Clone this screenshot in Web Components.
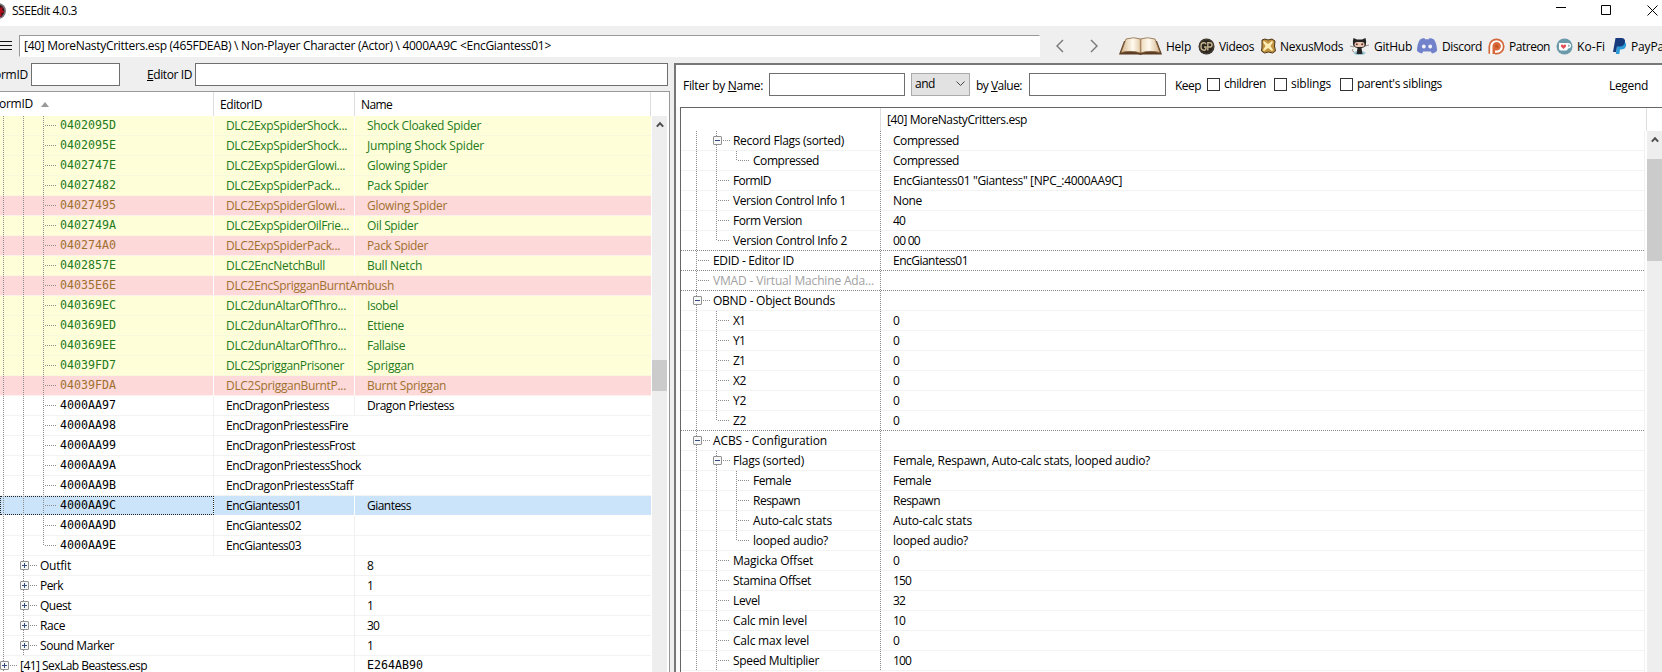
<!DOCTYPE html>
<html lang="en">
<head>
<meta charset="utf-8">
<title>SSEEdit 4.0.3</title>
<style>
    html, body {
        margin: 0;
        height: 100%;
        overflow: hidden;
    }
    body {
        font: 12px/20px "Open Sans", "Noto Sans", sans-serif;
        color: #000;
        background: #efefef;
    }
</style>
</head>
<body>
<edit-app></edit-app>
<script>
const icons = {
    app: `<svg width="16" height="18" viewBox="0 0 16 18"><circle cx="7" cy="9" r="8" fill="#77777d"/><circle cx="7" cy="9" r="6.3" fill="#35191d"/><path d="M7 3l1 3 4-1-1 3 3 2-4 1 1 4-4-2-4 2 1-4-3-2 3-1-1-3 3 1z" fill="#b50d1b"/></svg>`,
    menu: `<svg width="16" height="14" viewBox="0 0 16 14"><path d="M0 2.5h16M0 6.5h16M0 10.5h16" stroke="#111" stroke-width="1"/></svg>`,
    back: `<svg width="8" height="14" viewBox="0 0 8 14"><path d="M7 1L1 7l6 6" fill="none" stroke="#777" stroke-width="1.4"/></svg>`,
    next: `<svg width="8" height="14" viewBox="0 0 8 14"><path d="M1 1l6 6-6 6" fill="none" stroke="#777" stroke-width="1.4"/></svg>`,
    min: `<svg width="11" height="11" viewBox="0 0 11 11"><path d="M0 5.5h10" stroke="#000"/></svg>`,
    max: `<svg width="11" height="11" viewBox="0 0 11 11"><path d="M.5.5h9v9h-9z" fill="none" stroke="#000"/></svg>`,
    close: `<svg width="11" height="11" viewBox="0 0 11 11"><path d="M.5.5l10 10M10.5.5l-10 10" stroke="#000"/></svg>`,
    up: `<svg width="8" height="7" viewBox="0 0 8 7"><path d="M.8 5.6L4 2.2l3.2 3.4" fill="none" stroke="#505050" stroke-width="2"/></svg>`,
    down: `<svg width="9" height="6" viewBox="0 0 9 6"><path d="M.5.5l4 4 4-4" fill="none" stroke="#444"/></svg>`,
    book: `<svg width="43" height="18" viewBox="0 0 43 18"><defs><linearGradient id="p"><stop offset="0" stop-color="#d5b68c"/><stop offset=".3" stop-color="#fffaf0"/><stop offset=".47" stop-color="#e8d3b4"/><stop offset=".5" stop-color="#a98660"/><stop offset=".54" stop-color="#f0dfc5"/><stop offset=".72" stop-color="#fffaf0"/><stop offset="1" stop-color="#d5b68c"/></linearGradient></defs><path d="M5 4L0 17.5h19l2.500.5 2.500-.5h19L38 4z" fill="#5c3c22"/><path d="M7 2Q15-.5 21.500 2 28-.5 36 2l5 13.500Q30 13 21.500 16 13 13 2 15.500z" fill="url(#p)" stroke="#8a6844" stroke-width=".8"/></svg>`,
    gp: `<svg width="17" height="17" viewBox="0 0 17 17"><circle cx="8.500" cy="8.500" r="8" fill="#2b2620"/><circle cx="8.500" cy="8.500" r="7" fill="none" stroke="#544a3a" stroke-width=".8"/><path d="M8 6.200Q7.500 4.800 6 4.800 3 4.800 3 8.500T6 12.200Q8 12.200 8 10V9H6M9.800 12.500V4.800h1.900q2.300 0 2.300 2.100T11.700 9H9.800" fill="none" stroke="#c6b58f" stroke-width="1.400"/></svg>`,
    nexus: `<svg width="15" height="16" viewBox="0 0 15 16"><path d="M1 2l3-1 3 1 4-1 3 2-.500 5 1 5-3 2-4-1-4 1-3-2 .500-4z" fill="#c29442" stroke="#4b3514"/><path d="M3 3l4 3 4-3 1 1-2.500 4 2.500 4-1 1-4-3-4 3-1-1 2.500-4L2 4z" fill="#fdeeb5"/></svg>`,
    github: `<svg width="19" height="17" viewBox="0 0 19 17"><ellipse cx="9.500" cy="15" rx="6" ry="2" fill="#9bc7d3"/><path d="M0 8l4 1M19 7l-4 1M4 14Q1 13 3 11" stroke="#9a8d86" fill="none"/><path d="M3.500 0L7 1.500h5L15.500 0q1 3 .500 6 0 3-4.500 4l1 6h-6l1-6Q3 9 3 6 2.500 3 3.500 0z" fill="#252324"/><rect x="4.500" y="4" width="10" height="5" rx="2.500" fill="#efc8b3"/><circle cx="6.800" cy="6.200" r="1" fill="#53352d"/><circle cx="12.200" cy="6.200" r="1" fill="#53352d"/></svg>`,
    discord: `<svg width="20" height="16" viewBox="0 0 20 16"><path d="M3 1.500Q5 .3 7.300 0l.8 1.300h3.800L12.700 0Q15 .3 17 1.500 20 6 20 13q-2.500 2-5 2.500L13.800 13.500H6.200L5 15.500Q2.500 15 0 13 0 6 3 1.500z" fill="#7182cb"/><ellipse cx="6.800" cy="8.500" rx="1.900" ry="2.100" fill="#f3f3fa"/><ellipse cx="13.200" cy="8.500" rx="1.900" ry="2.100" fill="#f3f3fa"/></svg>`,
    patreon: `<svg width="17" height="17" viewBox="0 0 17 17"><path d="M1.300 15.700V8.500a7.200 7.200 0 1 1 7.200 7.200H7" fill="#fff" stroke="#d3683b" stroke-width="1.700"/><path d="M4.500 16V8.300a4.200 4.200 0 1 1 4.200 4.200H7V16z" fill="#d9683a"/><circle cx="8.700" cy="8.300" r="1.700" fill="#c65427"/></svg>`,
    kofi: `<svg width="17" height="17" viewBox="0 0 17 17"><circle cx="8.500" cy="8.500" r="8" fill="#6b9aaa"/><path d="M3 5h9q3 0 3 2.700T12 10.500q-.500 2-2 2H5q-2 0-2-2z" fill="#fff"/><path d="M12.300 6.500v2.500q1.300 0 1.300-1.300T12.300 6.500z" fill="#6b9aaa"/><path d="M7.500 11L5 8.500Q4.500 6.500 6 6.500q1 0 1.500 1Q8 6.500 9 6.500q1.500 0 1 2z" fill="#e25057"/></svg>`,
    paypal: `<svg width="14" height="16" viewBox="0 0 14 16"><path d="M4.500 4h7q2.200 1 1.500 4-1 3.500-5 3.500H7L6.300 16H2.800z" fill="#2d9bd6"/><path d="M2.500 0h6Q12.500.300 12 4q-1 4.500-5.500 4.500H4L3 14H0z" fill="#173a7c"/></svg>`
};

class AppIcon extends HTMLElement {
    constructor(){
        super();
        this.attachShadow({mode:"open"});
    }

    connectedCallback() {
        this.shadowRoot.innerHTML = /* html */ `
        <style>
            :host {
                display: inline-flex;
                flex: none;
                align-items: center;
            }
            svg { display: block; }
        </style>
        ${icons[this.getAttribute("name")]}`
    }
}
customElements.define("app-icon", AppIcon);

// Label with a fixed advance: the letter spacing is adjusted until the text fills its width
class AppLabel extends HTMLElement {
    constructor(){
        super();
        this.attachShadow({mode:"open"});
    }

    connectedCallback() {
        this.shadowRoot.innerHTML = /* html */ `
        <style>
            :host {
                display: inline-block;
                flex: none;
                white-space: nowrap;
            }
        </style>
        <span><slot></slot></span>`
        const width = Number(this.getAttribute("width"));
        if (!width) return;
        this.style.letterSpacing = "0px";
        const natural = this.shadowRoot.querySelector("span").getBoundingClientRect().width;
        this.style.letterSpacing = (width - natural) / this.textContent.length + "px";
        this.style.width = width + "px";
    }
}
customElements.define("app-label", AppLabel);

class AppField extends HTMLElement {
    constructor(){
        super();
        this.attachShadow({mode:"open"});
    }

    connectedCallback() {
        this.shadowRoot.innerHTML = /* html */ `
        <style>
            :host {
                display: block;
                box-sizing: border-box;
                flex: none;
                height: 23px;
                border: 1px solid #6f6f6f;
                background: #fff;
            }
        </style>
        <slot></slot>`
    }
}
customElements.define("app-field", AppField);

class AppCheck extends HTMLElement {
    constructor(){
        super();
        this.attachShadow({mode:"open"});
    }

    connectedCallback() {
        this.shadowRoot.innerHTML = /* html */ `
        <style>
            :host {
                display: flex;
                flex: none;
                gap: 4px;
                align-items: center;
            }
            i {
                box-sizing: border-box;
                width: 13px;
                height: 13px;
                border: 1px solid #333;
                background: #fff;
            }
        </style>
        <i></i><slot></slot>`
    }
}
customElements.define("app-check", AppCheck);

class ToolLink extends HTMLElement {
    constructor(){
        super();
        this.attachShadow({mode:"open"});
    }

    connectedCallback() {
        this.shadowRoot.innerHTML = /* html */ `
        <style>
            :host {
                display: flex;
                flex: none;
                align-items: center;
                gap: 4px;
            }
            app-label { padding-top: 1px; }
        </style>
        <app-icon name="${this.getAttribute("icon")}"></app-icon><app-label width="${this.getAttribute("width")}">${this.textContent}</app-label>`
    }
}
customElements.define("tool-link", ToolLink);

class ScrollBar extends HTMLElement {
    constructor(){
        super();
        this.attachShadow({mode:"open"});
    }

    connectedCallback() {
        this.shadowRoot.innerHTML = /* html */ `
        <style>
            :host {
                display: flex;
                flex-direction: column;
                align-items: center;
                flex: none;
                width: 15px;
                background: #eee;
                overflow: hidden;
            }
            app-icon { height: 17px; }
            i {
                width: 100%;
                height: ${this.getAttribute("size")}px;
                margin-top: ${this.getAttribute("offset")}px;
                background: #cbcbcb;
            }
        </style>
        <app-icon name="up"></app-icon><i></i>`
    }
}
customElements.define("scroll-bar", ScrollBar);

// guides: "|" line, "T" branch, "L" last branch, "+"/"-" expander
class TreeRow extends HTMLElement {
    constructor(){
        super();
        this.attachShadow({mode:"open"});
    }

    connectedCallback() {
        const cells = [...this.getAttribute("guides")].map(g => {
            const type = {"|": "line", "T": "line branch", "L": "last branch", "+": "line box plus", "-": "line box"}[g];
            return `<b class="${type}"></b>`;
        }).join("");
        this.shadowRoot.innerHTML = /* html */ `
        <style>
            :host {
                --line: #8c8c8c;
                display: flex;
                box-sizing: border-box;
                height: 20px;
                border-bottom: 1px solid #f3f3f3;
                line-height: 19px;
                white-space: nowrap;
            }
            :host([kind="new"]) { background: #feffd8; color: #257a1c; border-color: #f8f9dc; }
            :host([kind="conflict"]) { background: #fdd9d9; color: #a07030; border-color: #fff0ee; }
            :host([kind="selected"]) { background: #cce4fa; border-color: #fff; }
            :host([kind="empty"]) { color: #a2a2a2; }
            :host([section]) {
                border-bottom: 0;
                background: repeating-linear-gradient(90deg, #888 0 1px, transparent 1px 2px) 0 19px / 100% 1px no-repeat;
            }
            .tree {
                display: flex;
                box-sizing: border-box;
                flex: none;
                width: var(--tree);
                height: 20px;
                overflow: hidden;
                background: var(--sep-line, linear-gradient(var(--sep, #f0f0f0), var(--sep, #f0f0f0))) right / 1px 100% no-repeat;
            }
            :host([kind="selected"]) .tree {
                height: 19px;
                outline: 1px dotted #222;
                outline-offset: -1px;
            }
            :host([kind="new"]), :host([kind="conflict"]), :host([kind="selected"]) { --sep: #fff; }
            b {
                position: relative;
                flex: none;
                width: 20px;
                height: 20px;
            }
            b:first-child { margin-left: var(--shift, 0); }
            b:last-of-type { width: 27px; }
            .line::before, .last::before {
                content: "";
                position: absolute;
                left: 10px;
                top: 0;
                width: 1px;
                height: 20px;
                background: repeating-linear-gradient(var(--line) 0 1px, transparent 1px 2px);
            }
            .last::before { height: 10px; }
            .branch::after {
                content: "";
                position: absolute;
                left: 12px;
                top: 9px;
                width: 12px;
                height: 1px;
                background: repeating-linear-gradient(90deg, var(--line) 0 1px, transparent 1px 2px);
            }
            .box::after {
                content: "";
                position: absolute;
                box-sizing: border-box;
                left: 7px;
                top: 5px;
                width: 9px;
                height: 9px;
                border: 1px solid #929292;
                border-radius: 1px;
                background: linear-gradient(#334c80, #334c80) center / 5px 1px no-repeat, #f7f7f7;
            }
            .plus::after {
                background: linear-gradient(#334c80, #334c80) center / 5px 1px no-repeat, linear-gradient(#334c80, #334c80) center / 1px 5px no-repeat, #f7f7f7;
            }
            u {
                position: absolute;
                left: 17px;
                top: 9px;
                width: 7px;
                height: 1px;
                background: repeating-linear-gradient(90deg, var(--line) 0 1px, transparent 1px 2px);
            }
            ::slotted([slot="second"]) {
                box-sizing: border-box;
                flex: none;
                width: 141px;
                padding-left: 12px;
                border-right: 1px solid var(--sep, #f0f0f0);
            }
            ::slotted([slot="second"].over) { border-color: transparent; }
            ::slotted([slot="value"]) { padding-left: 12px; }
        </style>
        <div class="tree">${cells}<slot></slot></div>
        <slot name="second"></slot>
        <slot name="value"></slot>`
        this.shadowRoot.querySelectorAll(".box").forEach(box => box.appendChild(document.createElement("u")));
    }
}
customElements.define("tree-row", TreeRow);

// form id, editor id, editor id width, name, name width, kind
const npcs = [
    ["0402095D", "DLC2ExpSpiderShock...", 121, "Shock Cloaked Spider", 114, "new"],
    ["0402095E", "DLC2ExpSpiderShock...", 121, "Jumping Shock Spider", 117, "new"],
    ["0402747E", "DLC2ExpSpiderGlowi...", 119, "Glowing Spider", 80, "new"],
    ["04027482", "DLC2ExpSpiderPack...", 114, "Pack Spider", 61, "new"],
    ["04027495", "DLC2ExpSpiderGlowi...", 119, "Glowing Spider", 80, "conflict"],
    ["0402749A", "DLC2ExpSpiderOilFrie...", 123, "Oil Spider", 51, "new"],
    ["040274A0", "DLC2ExpSpiderPack...", 114, "Pack Spider", 61, "conflict"],
    ["0402857E", "DLC2EncNetchBull", 99, "Bull Netch", 55, "new"],
    ["04035E6E", "DLC2EncSprigganBurntAmbush", 168, "", 0, "conflict"],
    ["040369EC", "DLC2dunAltarOfThro...", 120, "Isobel", 31, "new"],
    ["040369ED", "DLC2dunAltarOfThro...", 120, "Ettiene", 37, "new"],
    ["040369EE", "DLC2dunAltarOfThro...", 120, "Fallaise", 38, "new"],
    ["04039FD7", "DLC2SprigganPrisoner", 118, "Spriggan", 47, "new"],
    ["04039FDA", "DLC2SprigganBurntP...", 120, "Burnt Spriggan", 79, "conflict"],
    ["4000AA97", "EncDragonPriestess", 103, "Dragon Priestess", 87, ""],
    ["4000AA98", "EncDragonPriestessFire", 122, "", 0, ""],
    ["4000AA99", "EncDragonPriestessFrost", 129, "", 0, ""],
    ["4000AA9A", "EncDragonPriestessShock", 135, "", 0, ""],
    ["4000AA9B", "EncDragonPriestessStaff", 127, "", 0, ""],
    ["4000AA9C", "EncGiantess01", 75, "Giantess", 44, "selected"],
    ["4000AA9D", "EncGiantess02", 75, "", 0, ""],
    ["4000AA9E", "EncGiantess03", 75, "", 0, ""]
];

// guides, label, width, value, width
const groups = [
    ["|+", "Outfit", 31, "8", 6],
    ["|+", "Perk", 23, "1", 6],
    ["|+", "Quest", 31, "1", 6],
    ["|+", "Race", 25, "30", 12],
    ["|+", "Sound Marker", 74, "1", 6],
    ["+", "[41] SexLab Beastess.esp", 127, "E264AB90", 0]
];

// guides, label, width, value, width, extra attributes
const fields = [
    ["|-", "Record Flags (sorted)", 111, "Compressed", 66],
    ["||L", "Compressed", 66, "Compressed", 66],
    ["|T", "FormID", 38, 'EncGiantess01 "Giantess" [NPC_:4000AA9C]', 229],
    ["|T", "Version Control Info 1", 113, "None", 29],
    ["|T", "Form Version", 69, "40", 12],
    ["|L", "Version Control Info 2", 114, "00 00", 27, "section"],
    ["T", "EDID - Editor ID", 81, "EncGiantess01", 75, "section"],
    ["T", "VMAD - Virtual Machine Ada...", 161, "", 0, 'section kind="empty"'],
    ["-", "OBND - Object Bounds", 122, "", 0],
    ["|T", "X1", 12, "0", 6],
    ["|T", "Y1", 12, "0", 6],
    ["|T", "Z1", 12, "0", 6],
    ["|T", "X2", 13, "0", 6],
    ["|T", "Y2", 13, "0", 6],
    ["|L", "Z2", 13, "0", 6, "section"],
    ["-", "ACBS - Configuration", 114, "", 0],
    ["|-", "Flags (sorted)", 71, "Female, Respawn, Auto-calc stats, looped audio?", 257],
    ["||T", "Female", 38, "Female", 38],
    ["||T", "Respawn", 47, "Respawn", 47],
    ["||T", "Auto-calc stats", 79, "Auto-calc stats", 79],
    ["||L", "looped audio?", 75, "looped audio?", 75],
    ["|T", "Magicka Offset", 80, "0", 6],
    ["|T", "Stamina Offset", 78, "150", 18],
    ["|T", "Level", 27, "32", 12],
    ["|T", "Calc min level", 74, "10", 12],
    ["|T", "Calc max level", 76, "0", 6],
    ["|T", "Speed Multiplier", 86, "100", 18]
];

const label = (text, width) => text ? `<app-label width="${width}">${text}</app-label>` : "";

class RecordList extends HTMLElement {
    constructor(){
        super();
        this.attachShadow({mode:"open"});
    }

    connectedCallback() {
        const rows = npcs.map(([id, editor, ew, name, nw, kind], i) => `
            <tree-row guides="||${i === npcs.length - 1 ? "L" : "T"}" kind="${kind}"><span class="mono">${id}</span><span slot="second" class="${ew > 121 && !name ? "over" : ""}">${label(editor, ew)}</span><span slot="value">${label(name, nw)}</span></tree-row>`);
        const tail = groups.map(([guides, text, w, value, vw]) => `
            <tree-row guides="${guides}" class="group">${label(text, w)}<span slot="value" class="${vw ? "" : "mono"}">${vw ? label(value, vw) : value}</span></tree-row>`);
        this.shadowRoot.innerHTML = /* html */ `
        <style>
            :host {
                display: flex;
                flex-direction: column;
                box-sizing: border-box;
                width: 670px;
                border-top: 1px solid #999;
                border-right: 1px solid #999;
                background: #fff;
                overflow: hidden;
            }
            header {
                display: flex;
                flex: none;
                height: 24px;
                line-height: 26px;
            }
            header > div {
                box-sizing: border-box;
                border-right: 1px solid #ddd;
                padding-left: 6px;
            }
            .id { width: 214px; display: flex; align-items: center; gap: 8px; }
            .id app-label { margin-left: -13px; }
            .id i {
                border: 4.5px solid transparent;
                border-top: 0;
                border-bottom: 5px solid #999;
            }
            .editor { width: 141px; }
            .name { width: 296px; }
            main { display: flex; flex: 1; min-height: 0; }
            .rows {
                --tree: 214px;
                --shift: -7px;
                width: 651px;
                margin-right: 1px;
                overflow: hidden;
            }
            .group { --tree: 355px; }
            .mono {
                font-family: "DejaVu Sans Mono", monospace;
                font-size: 11.63px;
            }
        </style>
        <header><div class="id"><app-label width="40">FormID</app-label><i></i></div><div class="editor">${label("EditorID", 42)}</div><div class="name">${label("Name", 31)}</div></header>
        <main>
            <div class="rows">${rows.join("")}${tail.join("")}</div>
            <scroll-bar offset="227" size="31"></scroll-bar>
        </main>`
    }
}
customElements.define("record-list", RecordList);

class RecordView extends HTMLElement {
    constructor(){
        super();
        this.attachShadow({mode:"open"});
    }

    connectedCallback() {
        const rows = fields.map(([guides, text, w, value, vw, extra = ""]) => `
            <tree-row guides="${guides}" ${extra}>${label(text, w)}<span slot="value">${label(value, vw)}</span></tree-row>`);
        this.shadowRoot.innerHTML = /* html */ `
        <style>
            :host {
                display: flex;
                flex-direction: column;
                flex: 1;
                min-height: 0;
                margin-left: 4px;
                border-top: 1px solid #666;
                border-left: 1px solid #666;
                background: #fff;
            }
            header {
                display: flex;
                flex: none;
                box-sizing: border-box;
                width: 966px;
                height: 23px;
                border-right: 1px solid #ddd;
                line-height: 24px;
            }
            header div {
                box-sizing: border-box;
                width: 200px;
                margin-right: 6px;
                border-right: 1px solid #ddd;
            }
            main { display: flex; flex: 1; min-height: 0; }
            .rows {
                --tree: 200px;
                --shift: 5px;
                --sep-line: repeating-linear-gradient(#888 0 1px, transparent 1px 2px);
                box-sizing: border-box;
                width: 966px;
                margin-right: 2px;
                border-right: 1px solid #f1f1f1;
                overflow: hidden;
            }
        </style>
        <header><div></div>${label("[40] MoreNastyCritters.esp", 140)}</header>
        <main>
            <div class="rows">${rows.join("")}</div>
            <scroll-bar offset="11" size="102"></scroll-bar>
        </main>`
    }
}
customElements.define("record-view", RecordView);

class EditApp extends HTMLElement {
    constructor(){
        super();
        this.attachShadow({mode:"open"});
    }

    connectedCallback() {
        this.shadowRoot.innerHTML = /* html */ `
        <style>
            :host {
                display: flex;
                flex-direction: column;
                height: 672px;
                overflow: hidden;
            }
            .title, .tools, .search, .filter {
                display: flex;
                flex: none;
                align-items: center;
            }
            .title { height: 26px; background: #fff; }
            .title app-icon:first-child { margin: -5px 5px 0 -9px; }
            .title app-label { margin-top: -5px; }
            .buttons { display: flex; gap: 35px; margin: -6px 4px 0 auto; }
            .buttons app-icon:first-child { margin-right: -1px; }
            .tools { height: 37px; overflow: hidden; }
            .tools > app-icon { margin-top: 3px; }
            .tools > .menu { margin: 3px 7px 0 -4px; }
            .path {
                box-sizing: border-box;
                flex: none;
                width: 1021px;
                height: 22px;
                padding-left: 4px;
                line-height: 19px;
                border: 1px solid #fff;
                border-top-color: #999;
                border-left-color: #999;
                background: #fff;
                margin-right: 16px;
                margin-top: 3px;
            }
            .links { display: flex; margin-top: 3px; }
            .work { display: flex; flex: 1; min-height: 0; }
            .left { display: flex; flex-direction: column; width: 670px; margin-right: 4px; }
            .left record-list { flex: 1; min-height: 0; margin-top: 5px; }
            .search { height: 23px; }
            .right {
                display: flex;
                flex-direction: column;
                flex: 1;
                min-width: 0;
                border-top: 2px solid #777;
                border-left: 2px solid #777;
                background: #fbfbfb;
            }
            .filter { height: 42px; background: #fff; padding-left: 7px; }
            .filter app-field, .combo { margin-top: -4px; }
            .filter app-check { margin-top: -4px; }
            .combo {
                display: flex;
                align-items: center;
                justify-content: space-between;
                box-sizing: border-box;
                width: 59px;
                height: 23px;
                margin-left: 6px;
                margin-right: 6px;
                padding: 0 4px 0 3px;
                border: 1px solid #aaa;
                background: #e2e2e2;
            }
        </style>
        <div class="title"><app-icon name="app"></app-icon>${label("SSEEdit 4.0.3", 65)}
            <div class="buttons"><app-icon name="min"></app-icon><app-icon name="max"></app-icon><app-icon name="close"></app-icon></div>
        </div>
        <div class="tools">
            <app-icon class="menu" name="menu"></app-icon>
            <div class="path">${label("[40] MoreNastyCritters.esp (465FDEAB) \\ Non-Player Character (Actor) \\ 4000AA9C &lt;EncGiantess01&gt;", 527)}</div>
            <app-icon name="back" style="margin-right: 26px"></app-icon>
            <app-icon name="next" style="margin-right: 21px"></app-icon>
            <div class="links">
                <tool-link icon="book" width="25" style="margin-right: 7px">Help</tool-link>
                <tool-link icon="gp" width="35" style="margin-right: 7px">Videos</tool-link>
                <tool-link icon="nexus" width="63" style="margin-right: 7px">NexusMods</tool-link>
                <tool-link icon="github" width="38" style="margin-right: 5px; gap: 5px">GitHub</tool-link>
                <tool-link icon="discord" width="40" style="margin-right: 6px; gap: 5px">Discord</tool-link>
                <tool-link icon="patreon" width="41" style="margin-right: 6px">Patreon</tool-link>
                <tool-link icon="kofi" width="28" style="margin-right: 8px">Ko-Fi</tool-link>
                <tool-link icon="paypal" width="36">PayPal</tool-link>
            </div>
        </div>
        <div class="work">
            <div class="left">
                <div class="search">
                    <app-label width="40" style="margin: 0 3px 0 -12px">FormID</app-label>
                    <app-field style="width: 89px; margin-right: 27px"></app-field>
                    <app-label width="45" style="margin-right: 3px"><u>E</u>ditor ID</app-label>
                    <app-field style="width: 473px"></app-field>
                </div>
                <record-list></record-list>
            </div>
            <div class="right">
                <div class="filter">
                    <app-label width="80" style="margin-right: 6px">Filter by <u>N</u>ame:</app-label>
                    <app-field style="width: 136px"></app-field>
                    <div class="combo">${label("and", 20)}<app-icon name="down"></app-icon></div>
                    <app-label width="46" style="margin-right: 7px">by <u>V</u>alue:</app-label>
                    <app-field style="width: 137px; margin-right: 9px"></app-field>
                    <app-label width="26" style="margin-right: 6px">Keep</app-label>
                    <app-check style="margin-right: 8px">${label("children", 42)}</app-check>
                    <app-check style="margin-right: 9px">${label("siblings", 40)}</app-check>
                    <app-check>${label("parent's siblings", 85)}</app-check>
                    <app-label width="39" style="margin: 0 14px 0 auto">Legend</app-label>
                </div>
                <record-view></record-view>
            </div>
        </div>`
    }
}
customElements.define("edit-app", EditApp);
</script>
</body>
</html>
